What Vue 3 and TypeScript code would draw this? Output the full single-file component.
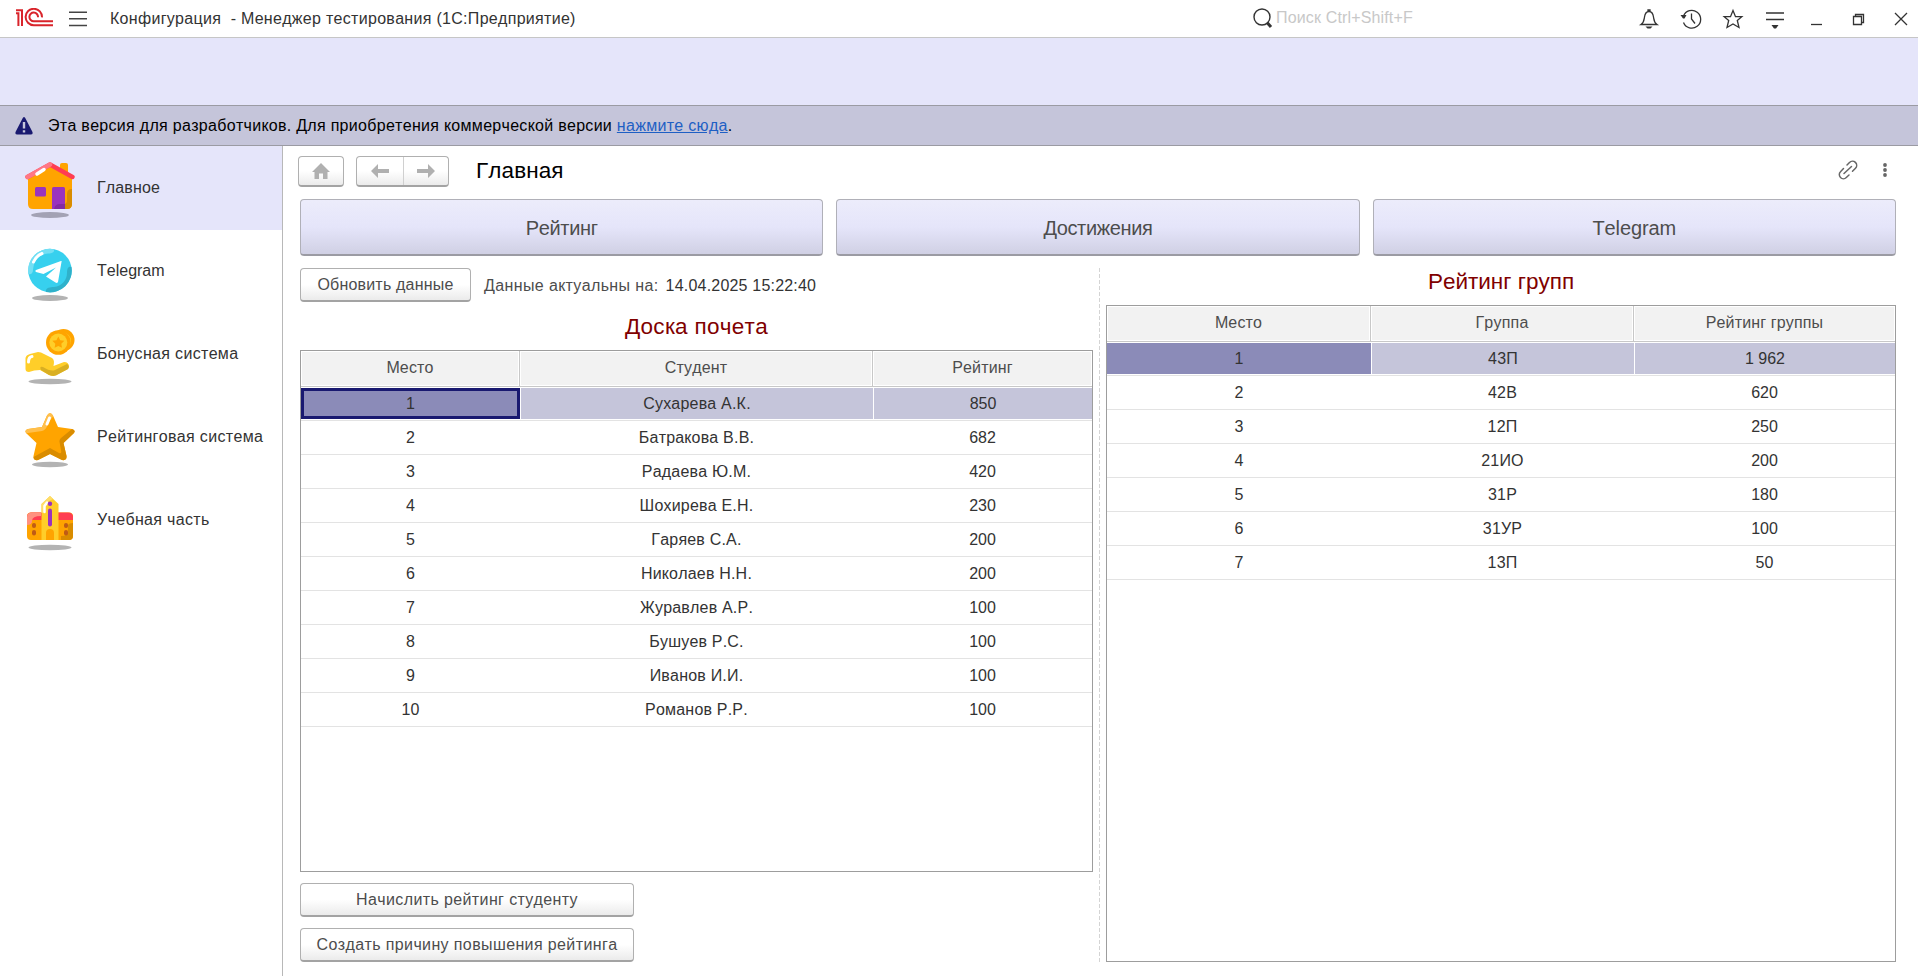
<script setup lang="ts">
interface Row { cells: string[] }
const nav: string[] = ['Главное', 'Telegram', 'Бонусная система', 'Рейтинговая система', 'Учебная часть']
const actions: string[] = ['Рейтинг', 'Достижения', 'Telegram']
const students: Row[] = [
  ['1', 'Сухарева А.К.', '850'], ['2', 'Батракова В.В.', '682'], ['3', 'Радаева Ю.М.', '420'],
  ['4', 'Шохирева Е.Н.', '230'], ['5', 'Гаряев С.А.', '200'], ['6', 'Николаев Н.Н.', '200'],
  ['7', 'Журавлев А.Р.', '100'], ['8', 'Бушуев Р.С.', '100'], ['9', 'Иванов И.И.', '100'],
  ['10', 'Романов Р.Р.', '100'],
].map((cells) => ({ cells }))
const groups: Row[] = [
  ['1', '43П', '1 962'], ['2', '42В', '620'], ['3', '12П', '250'], ['4', '21ИО', '200'],
  ['5', '31Р', '180'], ['6', '31УР', '100'], ['7', '13П', '50'],
].map((cells) => ({ cells }))
const tables = {
  students: { head: ['Место', 'Студент', 'Рейтинг'], rows: students },
  groups: { head: ['Место', 'Группа', 'Рейтинг группы'], rows: groups },
}
</script>

<template>
  <div class="app">
    <header class="titlebar">
      <svg class="logo" width="38" height="20" viewBox="0 0 38 20" fill="none" stroke="#d9242b" stroke-width="2">
        <path d="M0 5.2H2.4V18M0 2.2H6V18" />
        <path d="M26 9.400A8.200 8.200 0 1 0 17.800 17.200H37M22 9.200A4.300 4.300 0 1 0 17.800 13.200H37" />
      </svg>
      <svg class="burger" width="18" height="16" viewBox="0 0 18 16" stroke="#444" stroke-width="1.5"><path d="M0 1.2H18M0 7.8H18M0 14.4H18" /></svg>
      <span class="wintitle">Конфигурация&nbsp; - Менеджер тестирования (1С:Предприятие)</span>
      <div class="search">
        <svg width="20" height="21" viewBox="0 0 20 21" fill="none" stroke="#333"><circle cx="9" cy="9" r="8" stroke-width="1.4" /><path d="M14 14.5L18 19" stroke-width="3" /></svg>
        <span>Поиск Ctrl+Shift+F</span>
      </div>
      <div class="tools">
        <svg viewBox="0 0 24 24"><path d="M4 17.500C7 15.500 7 13 7.500 10C8 6.500 9 4.500 12 4.500S16 6.500 16.500 10C17 13 17 15.500 20 17.500ZM11 4.500V3H13V4.500" /><path d="M8.500 19.500H15.500L13.500 21.500H10.500Z" fill="#333" stroke="none" /></svg>
        <svg viewBox="0 0 24 24"><path d="M4.500 9A8.900 8.900 0 1 1 4.500 15.500M12.500 6.500V12L16 16.500" /><path d="M1.500 8H7.500L5.500 11.500H4Z" fill="#333" stroke="none" /></svg>
        <svg viewBox="0 0 24 24"><path d="M12 3.500L14.500 9.700H20.800L16.300 13.500L18 20.500L12 17L6 20.500L7.700 13.500L3.200 9.700H9.500Z" /></svg>
        <svg viewBox="0 0 24 24"><path d="M3 6H21M3 12.500H21" /><path d="M8.500 18H15.500L13 21.500H11Z" fill="#333" stroke="none" /></svg>
        <svg viewBox="0 0 24 24"><path d="M6 17.500H17" /></svg>
        <svg viewBox="0 0 24 24"><path d="M6.500 9.500H14.500V17.500H6.500ZM8.500 9V7.500H16.500V15.500H14.500" /></svg>
        <svg viewBox="0 0 24 24"><path d="M6 6L18 18M18 6L6 18" /></svg>
      </div>
    </header>
    <div class="band"></div>
    <div class="notice">
      <svg width="18" height="18" viewBox="0 0 18 18"><path d="M9 0Q10 0 10.500 1.500L17.500 15Q18 17.500 16 17.500H2Q0 17.500 .5 15L7.500 1.500Q8 0 9 0Z" fill="#191970" /><path d="M9 5V11.500M9 13.300V15.500" stroke="#c5c5da" stroke-width="2.400" /></svg>
      <span>Эта версия для разработчиков. Для приобретения коммерческой версии <a>нажмите сюда</a>.</span>
    </div>
    <div class="body">
      <nav class="side">
        <div v-for="(label, i) in nav" :key="label" class="item" :class="{ active: i === 0, latin: i === 1 }">
          <svg width="50" height="58" viewBox="0 0 50 58">
            <template v-if="i === 0">
              <ellipse cx="25" cy="54" rx="19" ry="3" fill="#a3a2b4" />
              <path d="M35 4Q35 2 37 2H41Q43 2 43 4V16H35Z" fill="#ffa400" />
              <path d="M3 16L25 3L47 16V43Q47 48 42 48H8Q3 48 3 43Z" fill="#ffa400" />
              <path d="M42 33Q42 28 47 28V43Q47 48 42 48H39V43Q42 43 42 39Z" fill="#d98c00" />
              <rect x="10" y="26" width="11" height="9.500" rx="1.500" fill="#9a33be" />
              <path d="M27 27.500Q27 26 28.500 26H38.500Q40 26 40 27.500V48H27Z" fill="#9a33be" />
              <path d="M29 48Q30 43 35 43H40V48Z" fill="#832ba2" />
              <path d="M2.500 16L25 3.500L47.500 16" stroke="#ff3d51" stroke-width="4.400" fill="none" stroke-linecap="round" stroke-linejoin="round" />
              <path d="M2.500 16L25 3.500" stroke="#ff7785" stroke-width="4.400" stroke-linecap="round" />
              <path d="M12 13L19 8.500" stroke="#fff" stroke-width="3.500" stroke-linecap="round" />
            </template>
            <template v-else-if="i === 1">
              <ellipse cx="25" cy="54" rx="18" ry="3" fill="#b3b3b3" />
              <circle cx="25" cy="26.500" r="21.700" fill="#37d0ee" />
              <path d="M3.300 30A21.700 21.700 0 0 1 29 5.200C30 10 24 9 20 10C10 13 9 19 8 26C8 29 6 31 3.300 30Z" fill="#73dff4" />
              <path d="M46.500 23A21.700 21.700 0 0 1 21 48C20 44 25 43 29 43C37 42 42 36 42 29C42 25 43 22 46.500 23Z" fill="#2fb1ca" />
              <path d="M8.500 18Q11 12 17 9.500" stroke="#fff" stroke-width="3" stroke-linecap="round" fill="none" />
              <path d="M11 26L36 17Q37 16.500 36.500 18L33 38Q32 39.500 30.500 38.500L21 32.500L31 23.500L18.500 30L11 28Q9.500 27 11 26Z" fill="#fff" />
            </template>
            <template v-else-if="i === 2">
              <ellipse cx="25" cy="54.500" rx="21.500" ry="2.800" fill="#b3b3b3" />
              <circle cx="38.500" cy="13" r="11" fill="#ffa400" /><circle cx="37.500" cy="14" r="8.500" fill="#ffce29" />
              <circle cx="33.300" cy="15.500" r="12.300" fill="#ffa400" /><circle cx="33.300" cy="15.500" r="9" fill="#ffce29" />
              <path d="M33.300 9.500L35.200 13.200L39.300 13.800L36.300 16.700L37 20.800L33.300 18.900L29.600 20.800L30.300 16.700L27.300 13.800L31.400 13.200Z" fill="#ffa400" />
              <path d="M.5 31Q1 28 5 27L13 25Q16 25 19 27L27 31Q30 33 28.500 39L39 35Q44 35 44 40L43 42L31 48Q28 49.500 24 48L15 43Q9 43 4 45Q.5 45 .5 42Z" fill="#ffce29" />
              <path d="M16 43Q14 39 18 40Q26 45 30 43L42 37Q45 39 43 42L31 48.500Q28 49.500 24 48Z" fill="#d9af23" />
              <path d="M3.500 35Q3.500 30 7 29.500" stroke="#fff" stroke-width="3" stroke-linecap="round" fill="none" />
            </template>
            <template v-else-if="i === 3">
              <ellipse cx="25" cy="54.500" rx="18" ry="2.800" fill="#b3b3b3" />
              <path d="M22 5.500Q25 1 28 5.500L33 17L47 19Q51 20 49 23L38.500 33L41.500 46Q42 51 37 50L25 44L13 50Q8 51 8.500 46L11.500 33L1 23Q-1 20 3 19L17 17Z" fill="#ffa400" />
              <path d="M22 5.500Q25 1 28 5.500C28 8 25 9 23 14Q21 20 17 21L3 23Q1 24 1 22Q0 20 3 19L17 17Z" fill="#ffbf4c" />
              <path d="M47 19Q51 20 49 23L38.500 33L41.500 46Q42 51 37 50L25 44L13 50Q9 51 8.500 47L25 38L34 43Q37 44 36 40L34.500 32Q34 30 36 28Z" fill="#d98c00" />
              <path d="M22 14L24.500 8" stroke="#fff" stroke-width="3" stroke-linecap="round" />
            </template>
            <template v-else>
              <ellipse cx="25" cy="54.500" rx="21.500" ry="2.800" fill="#b3b3b3" />
              <rect x="2" y="19.500" width="46" height="27.500" rx="4" fill="#ffa400" />
              <path d="M36 47V43Q43 43 43 38V32Q44 30 48 30V43Q48 47 44 47Z" fill="#d98c00" />
              <path d="M2 27V24Q2 19.500 7 19.500H43Q48 19.500 48 24V27Z" fill="#ff3d51" />
              <path d="M2 32V24Q2 19.500 7 19.500H16V23Q7 23 7 28Q7 32 2 32Z" fill="#ff9180" />
              <path d="M16.500 47V11L25 3L33.500 11V47Z" fill="#ffce29" />
              <path d="M16.500 20V11L25 3L28 6Q20 9 20 15Q20 20 16.500 20Z" fill="#ffdd69" />
              <path d="M19.500 19V13L22 9.500" stroke="#fff" stroke-width="2.500" fill="none" stroke-linecap="round" />
              <circle cx="25" cy="10.800" r="2.200" fill="#9a33be" /><rect x="23" y="15.500" width="4" height="18" rx="2" fill="#9a33be" />
              <path d="M21 47V40A4 4 0 0 1 29 40V47Z" fill="#ffa400" />
              <g fill="#bf5b16"><rect x="7" y="30" width="4" height="5" rx="2" /><rect x="7" y="37" width="4" height="5.500" rx="2" /><rect x="39" y="30" width="4" height="5" rx="2" /><rect x="39" y="37" width="4" height="5.500" rx="2" /></g>
            </template>
          </svg>
          <span>{{ label }}</span>
        </div>
      </nav>
      <main class="page">
        <div class="pagehead">
          <button class="btn home"><svg width="18" height="16" viewBox="0 0 18 16"><path d="M9 0L18 9H15.500V16H11V10.500H7V16H2.500V9H0Z" fill="#b0b0b0" /></svg></button>
          <div class="btn pair">
            <span><svg width="18" height="14" viewBox="0 0 18 14"><path d="M7 0V5H18V9H7V14L0 7Z" fill="#b0b0b0" /></svg></span>
            <span><svg width="18" height="14" viewBox="0 0 18 14"><path d="M11 0V5H0V9H11V14L18 7Z" fill="#b0b0b0" /></svg></span>
          </div>
          <h1>Главная</h1>
          <svg class="link" width="20" height="20" viewBox="0 0 20 20" fill="none" stroke="#666" stroke-width="1.500" stroke-linecap="round"><path d="M9 5L11.500 2.500A4.100 4.100 0 0 1 17.500 8.300L14.500 11.300M6 13.500L13.500 6.500M5.500 8.500L2.500 11.700A4.100 4.100 0 0 0 8.300 17.500L11 15" /></svg>
          <svg class="dots" width="4" height="14" viewBox="0 0 4 14" fill="#666"><circle cx="2" cy="2" r="1.900" /><circle cx="2" cy="7" r="1.900" /><circle cx="2" cy="12" r="1.900" /></svg>
        </div>
        <div class="actions"><button v-for="a in actions" :key="a" class="big">{{ a }}</button></div>
        <div class="cols">
          <section class="left">
            <div class="refresh">
              <button class="btn upd">Обновить данные</button>
              <span class="lbl">Данные актуальны на:</span><span class="date">14.04.2025 15:22:40</span>
            </div>
            <h2>Доска почета</h2>
            <div class="grid students">
              <div class="tr head"><div v-for="h in tables.students.head" :key="h">{{ h }}</div></div>
              <div v-for="(r, i) in tables.students.rows" :key="i" class="tr" :class="{ sel: i === 0 }"><div v-for="(c, j) in r.cells" :key="j">{{ c }}</div></div>
            </div>
            <button class="btn wide">Начислить рейтинг студенту</button>
            <button class="btn wide">Создать причину повышения рейтинга</button>
          </section>
          <div class="splitter"></div>
          <section class="right">
            <h2>Рейтинг групп</h2>
            <div class="grid groups">
              <div class="tr head"><div v-for="h in tables.groups.head" :key="h">{{ h }}</div></div>
              <div v-for="(r, i) in tables.groups.rows" :key="i" class="tr" :class="{ sel: i === 0 }"><div v-for="(c, j) in r.cells" :key="j">{{ c }}</div></div>
            </div>
          </section>
        </div>
      </main>
    </div>
  </div>
</template>

<style>
body { margin: 0; background: #fff; overflow: hidden; }
</style>
<style scoped>
* { box-sizing: border-box; }
svg { display: block; flex: none; }
.app { width: 1918px; height: 976px; display: flex; flex-direction: column; font: 16px/20px "Liberation Sans", Arial, sans-serif; font-kerning: none; color: #333; white-space: nowrap; }
button { font: inherit; font-kerning: none; padding: 0; margin: 0; }
.titlebar { height: 38px; border-bottom: 1px solid #c6c6c6; display: flex; align-items: center; flex: none; }
.logo { margin: 0 0 1px 16px; }
.burger { margin-left: 15px; }
.wintitle { margin-left: 23px; width: 1143px; letter-spacing: .3px; }
.search { width: 375px; display: flex; color: #c8c8c8; gap: 3px; letter-spacing: .15px; }
.tools { display: flex; gap: 18px; margin-left: 9px; }
.tools svg { width: 24px; height: 24px; fill: none; stroke: #333; stroke-width: 1.3; }
.band { height: 67px; background: #e5e5fa; flex: none; }
.notice { height: 41px; flex: none; background: #c5c5da; border: solid #9b9ba3; border-width: 1px 0; display: flex; align-items: center; padding-left: 15px; gap: 15px; color: #000; letter-spacing: .3px; }
.notice a { color: #1e5fc4; text-decoration: underline; }
.body { flex: 1; display: flex; min-height: 0; }
.side { width: 283px; border-right: 1px solid #b8b8b8; flex: none; }
.item { height: 83px; display: flex; align-items: center; padding-left: 25px; gap: 22px; letter-spacing: .33px; }
.item svg { margin-top: 5px; }
.item.latin { letter-spacing: 0; }
.item.active { background: #e5e5fa; box-shadow: 0 1px #e5e5fa; letter-spacing: .15px; }
.page { flex: 1; display: flex; flex-direction: column; padding: 10px 22px 14px 15px; min-width: 0; }
.pagehead { display: flex; height: 31px; align-items: center; }
.btn { border: 1px solid #b0b0b0; border-bottom: 2px solid #a3a3a3; border-radius: 4px; background: linear-gradient(#fff 50%, #ebebeb); color: #4d4d4d; display: flex; align-items: center; justify-content: center; }
.home { width: 46px; height: 31px; }
.pair { width: 93px; height: 31px; margin-left: 12px; }
.pair span { flex: 1; height: 100%; display: flex; align-items: center; justify-content: center; }
.pair span + span { flex: 0 0 45px; border-left: 1px solid #d0d0d0; }
h1, h2 { margin: 0; font-weight: 400; }
h1 { font-size: 22.5px; color: #000; margin: 0 0 2px 27px; flex: 1; letter-spacing: .1px; }
.link { margin-bottom: 3px; }
.dots { margin: 0 9px 3px 25px; }
.actions { display: flex; gap: 13px; margin: 12px 0 12px 2px; }
.big { flex: 1; height: 57px; padding-top: 2px; font-size: 20px; letter-spacing: -.35px; color: #4d4d4d; border: 1px solid #b0b0b8; border-bottom: 2px solid #9b9ba3; border-radius: 4px; background: linear-gradient(#ececfb, #e5e5fa 50%, #d0d0e4); }
.actions .big:last-child { letter-spacing: -.1px; }
.cols { flex: 1; display: flex; margin-left: 2px; min-height: 0; }
.left { width: 793px; display: flex; flex-direction: column; }
.refresh { display: flex; align-items: center; height: 34px; }
.upd { width: 171px; height: 34px; letter-spacing: .2px; }
.lbl { margin: 2px 0 0 13px; color: #4d4d4d; letter-spacing: .38px; }
.date { margin: 2px 0 0 7px; letter-spacing: .2px; }
h2 { color: #800000; font-size: 22.5px; text-align: center; }
.left h2 { height: 48px; line-height: 49px; letter-spacing: .3px; }
.grid { border: 1px solid #9d9d9d; flex: 1; }
.tr { display: grid; height: 34px; border-bottom: 1px solid #e3e3e3; text-align: center; line-height: 34px; }
.tr div:nth-child(2) { letter-spacing: .2px; }
.students .tr { grid-template-columns: 219px 353px 1fr; }
.groups .tr { grid-template-columns: 264px 263px 1fr; }
.tr.head { height: 36px; border-bottom: 1px solid #c8c8c8; color: #4d4d4d; line-height: 31px; letter-spacing: .15px; }
.head div { background: #f2f2f2; border: 1px solid #fff; box-shadow: 1px 0 #c8c8c8; margin-right: 1px; }
.head div:last-child { box-shadow: none; margin: 0; }
.sel > div { background: #c5c5da; margin: 1px 0; height: 31px; line-height: 32px; border-left: 1px solid #fff; }
.sel > div:first-child { background: #8b8bb8; border: 0; }
.students .sel > div:first-child { box-shadow: inset 0 0 0 3px #191970; }
.wide { width: 334px; height: 34px; margin-top: 11px; letter-spacing: .38px; }
.splitter { width: 1px; margin: 0 6px; background: repeating-linear-gradient(#d4d4d4 0 4px, transparent 4px 6px); }
.right { flex: 1; display: flex; flex-direction: column; }
.right h2 { height: 37px; line-height: 27px; }
</style>
